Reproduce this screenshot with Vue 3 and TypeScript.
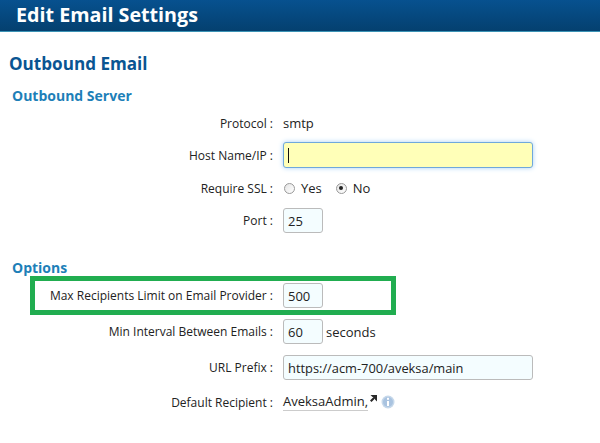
<script setup lang="ts">
import { ref } from "vue";

const host = ref<string>("");
const port = ref<string>("25");
const maxRecipients = ref<string>("500");
const minInterval = ref<string>("60");
const urlPrefix = ref<string>("https://acm-700/aveksa/main");
const ssl = ref<string>("no");
</script>

<template>
  <div class="page">
    <div class="header">Edit Email Settings</div>
    <h1>Outbound Email</h1>
    <h2>Outbound Server</h2>

    <div class="row protocol">
      <label>Protocol :</label>
      <span class="value">smtp</span>
    </div>
    <div class="row host">
      <label>Host Name/IP :</label>
      <div class="field focused"><span class="caret"></span>{{ host }}</div>
    </div>
    <div class="row ssl">
      <label>Require SSL :</label>
      <span class="radio" :class="{ on: ssl === 'yes' }"></span>
      <span class="value radio-text">Yes</span>
      <span class="radio" :class="{ on: ssl === 'no' }"></span>
      <span class="value">No</span>
    </div>
    <div class="row port">
      <label>Port :</label>
      <div class="field small">{{ port }}</div>
    </div>

    <h2 class="options">Options</h2>

    <div class="row max">
      <div class="callout"></div>
      <label>Max Recipients Limit on Email Provider :</label>
      <div class="field small">{{ maxRecipients }}</div>
    </div>
    <div class="row interval">
      <label>Min Interval Between Emails :</label>
      <div class="field small">{{ minInterval }}</div>
      <span class="value unit">seconds</span>
    </div>
    <div class="row url">
      <label>URL Prefix :</label>
      <div class="field wide">{{ urlPrefix }}</div>
    </div>
    <div class="row recipient">
      <label>Default Recipient :</label>
      <span class="value user">AveksaAdmin,</span>
      <svg class="arrow" width="7" height="7" viewBox="0 0 7 7">
        <path d="M0.5 0H7V6.5L5 4.5V3.5L1.5 7L0 5.5L3.5 2H2.5Z" fill="#2a2a2a" />
      </svg>
      <svg class="info" width="14" height="14" viewBox="0 0 14 14">
        <circle cx="7" cy="7" r="6.5" fill="#c6d8ea" />
        <circle cx="7" cy="7" r="5" fill="#a9c3e0" />
        <rect x="6" y="2.8" width="2" height="2" fill="#fff" />
        <rect x="6" y="6" width="2" height="5" fill="#fff" />
      </svg>
    </div>
  </div>
</template>

<style>
html,
body {
  margin: 0;
  background: #fff;
}
</style>

<style scoped>
.page {
  width: 600px;
  height: 443px;
  overflow: hidden;
  font-family: "Open Sans", "Noto Sans", sans-serif;
  font-size: 12px;
  color: #222;
  box-sizing: border-box;
}

.header {
  height: 32px;
  box-sizing: border-box;
  padding-left: 16px;
  border-bottom: 1px solid #3b93b5;
  background: linear-gradient(#07518f, #04406f);
  color: #fff;
  font-size: 19.7px;
  font-weight: 700;
  line-height: 30px;
}

h1 {
  margin: 20px 0 0 9px;
  color: #0a5592;
  font-size: 17.1px;
  font-weight: 700;
  line-height: 24px;
}

h2 {
  margin: 10px 0 0 12px;
  color: #1d7fb8;
  font-size: 14px;
  font-weight: 700;
  line-height: 20px;
}

h2.options {
  margin-top: 25px;
}

.row {
  display: flex;
  align-items: center;
  position: relative;
}

.row label {
  width: 273px;
  margin-right: 10px;
  text-align: right;
  flex-shrink: 0;
}

.value {
  font-size: 13px;
}

.protocol {
  height: 20px;
  margin-top: 7px;
}

.host {
  margin-top: 9px;
}

.ssl {
  height: 20px;
  margin-top: 10px;
}

.port {
  margin-top: 10px;
}

.max {
  margin-top: 5px;
}

.interval {
  margin-top: 11px;
}

.url {
  margin-top: 11px;
}

.recipient {
  height: 20px;
  margin-top: 12px;
}

.field {
  display: flex;
  align-items: center;
  box-sizing: border-box;
  height: 25px;
  padding: 1px 4px 0;
  border: 1px solid #bbb;
  border-radius: 3px;
  background: #f4fdff;
  color: #222;
  font-size: 13px;
}

.field.small {
  width: 40px;
}

.field.wide {
  width: 250px;
  font-size: 12.85px;
}

.field.focused {
  width: 250px;
  height: 26px;
  border-color: #6fa8dc;
  background: #ffffb8;
  box-shadow: 0 0 5px #a9d0f5;
}

.caret {
  display: block;
  width: 1px;
  height: 15px;
  background: #111;
}

.radio {
  position: relative;
  box-sizing: border-box;
  width: 11px;
  height: 11px;
  margin-right: 6px;
  margin-left: 1px;
  border: 1px solid #999;
  border-radius: 50%;
  background: linear-gradient(135deg, #e4e4e4, #fff);
}

.radio.on::after {
  content: "";
  position: absolute;
  left: 2.5px;
  top: 2.5px;
  width: 4px;
  height: 4px;
  border-radius: 50%;
  background: #222;
}

.radio-text {
  margin-right: 13px;
}

.unit {
  margin-left: 3px;
}

.callout {
  position: absolute;
  left: 30px;
  top: -7px;
  width: 366px;
  height: 39px;
  box-sizing: border-box;
  border: 5px solid #21ad50;
}

.user {
  border-bottom: 1px solid #ccc;
  line-height: 17px;
}

.arrow {
  margin: 0 0 7px 2px;
}

.info {
  margin: 0 0 0 4px;
}
</style>
